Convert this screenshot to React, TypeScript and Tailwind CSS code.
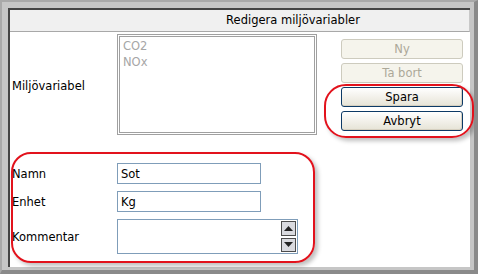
const font = { fontFamily: '"DejaVu Sans", Verdana, sans-serif' };

function XpButton({ label, disabled }: { label: string; disabled?: boolean }) {
  return disabled ? (
    <div className="flex h-[20px] w-[122px] items-center justify-center rounded-[3px] border border-[#cdcbbe] bg-[#f5f4ec] pt-[1px] text-[#aca899]">
      {label}
    </div>
  ) : (
    <div className="flex h-[20px] w-[122px] items-center justify-center rounded-[3px] border border-[#0d3a66] bg-gradient-to-b from-[#ffffff] to-[#e6e3d6] pt-[1px] text-black shadow-[inset_-1px_-1px_0_#d6d0c0]">
      {label}
    </div>
  );
}

function ScrollArrow({ up }: { up?: boolean }) {
  return (
    <div className="flex h-[15px] w-[15px] items-center justify-center border border-[#4c4c4c] bg-[#d9dadf]">
      <svg width="9" height="5" viewBox="0 0 9 5">
        {up ? (
          <polygon points="0,5 9,5 4.5,0" fill="#222" />
        ) : (
          <polygon points="0,0 9,0 4.5,5" fill="#222" />
        )}
      </svg>
    </div>
  );
}

export default function App() {
  return (
    <div
      className="relative h-[274px] w-[478px] overflow-hidden border-l-2 border-t-2 border-b-4 border-r-4 border-l-[#a9a9a9] border-t-[#a9a9a9] border-r-[#8a8a8a] border-b-[#8a8a8a] bg-[#c6c6c6] pb-[3px] pl-[6px] pr-[4px] pt-[6px] text-[11.5px] text-black"
      style={font}
    >
      <div className="flex h-full w-full flex-col border-l-2 border-t-2 border-[#454545] bg-white">
        {/* header */}
        <div className="flex h-[22px] items-center justify-center border-b border-r border-b-[#a8a8a8] border-r-[#c8c8c8] bg-[#f0f0f0] pl-[107px] pt-[1px]">
          Redigera miljövariabler
        </div>

        <div className="px-[2px] pt-[2px]">
          {/* variable list row */}
          <div className="flex">
            <div className="flex w-[105px] items-center pt-[4px]">Miljövariabel</div>
            <div className="h-[101px] w-[200px] border-[3px] border-double border-[#a0a0a0] px-[3px] pt-[1px] leading-[16px] text-[#a6a6a6]">
              <div>CO2</div>
              <div>NOx</div>
            </div>
            <div className="ml-[24px] mt-[5px] flex flex-col gap-[4px]">
              <XpButton label="Ny" disabled />
              <XpButton label="Ta bort" disabled />
              <XpButton label="Spara" />
              <XpButton label="Avbryt" />
            </div>
          </div>

          {/* form fields */}
          <div className="mt-[28px] grid grid-cols-[105px_auto] items-center gap-y-[7px]">
            <div className="pt-[3px]">Namn</div>
            <div className="flex h-[21px] w-[144px] items-center border border-[#7f9db9] pl-[3px] pt-[2px]">
              Sot
            </div>
            <div className="pt-[3px]">Enhet</div>
            <div className="flex h-[21px] w-[144px] items-center border border-[#7f9db9] pl-[3px] pt-[2px]">
              Kg
            </div>
            <div className="pt-[3px]">Kommentar</div>
            <div className="flex h-[35px] w-[181px] justify-end border border-[#7f9db9] p-[1px]">
              <div className="flex flex-col gap-[2px]">
                <ScrollArrow up />
                <ScrollArrow />
              </div>
            </div>
          </div>
        </div>
      </div>

      {/* red annotation outlines */}
      <div className="pointer-events-none absolute left-[322px] top-[82px] h-[54px] w-[150px] rounded-[22px] border-2 border-[#e2121c] shadow-[3px_3px_4px_rgba(0,0,0,0.25)]" />
      <div className="pointer-events-none absolute left-[9px] top-[150px] h-[111px] w-[304px] rounded-[20px] border-2 border-[#e2121c] shadow-[3px_3px_4px_rgba(0,0,0,0.25)]" />
    </div>
  );
}
